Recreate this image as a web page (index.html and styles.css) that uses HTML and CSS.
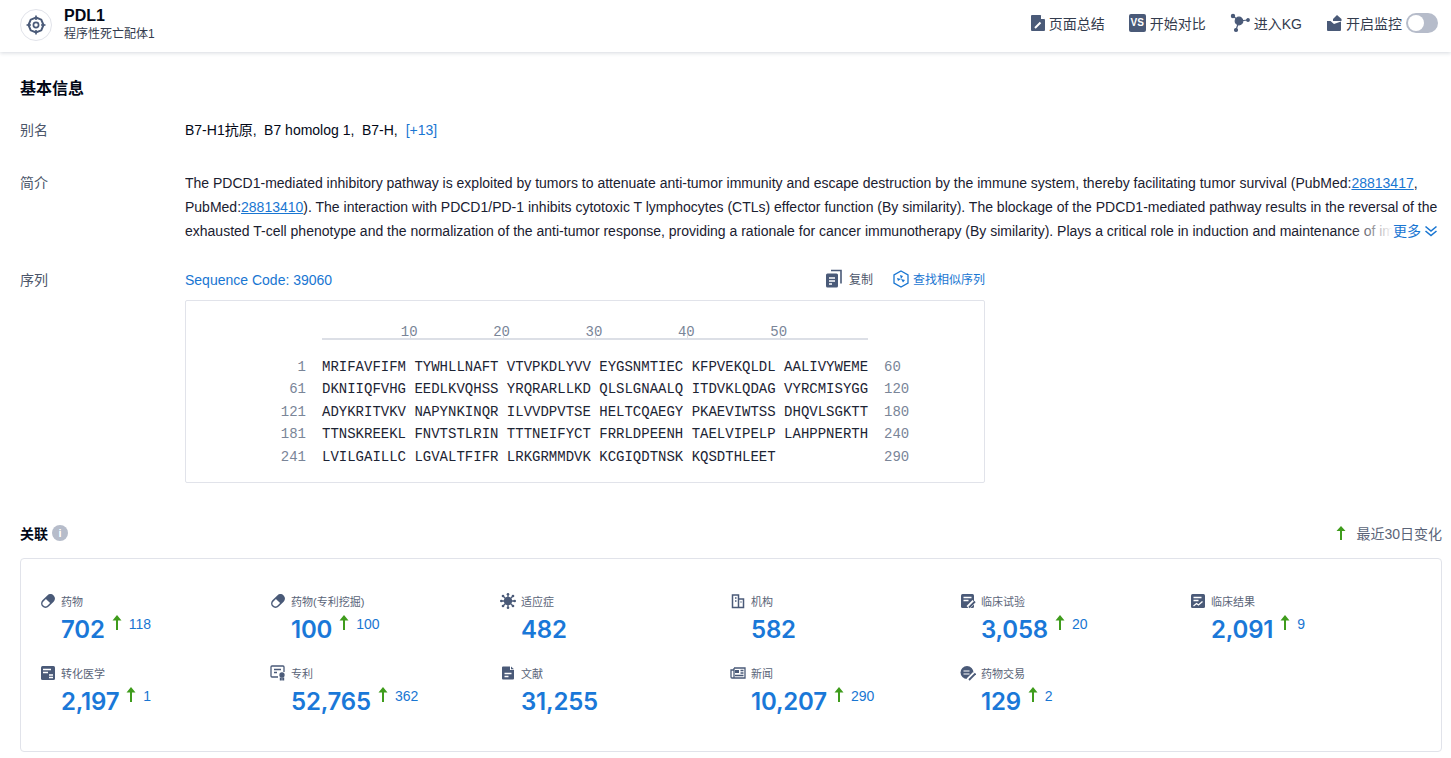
FILE: index.html
```html
<!DOCTYPE html>
<html lang="zh">
<head>
<meta charset="utf-8">
<title>PDL1</title>
<link rel="stylesheet" href="styles.css">
</head>
<body>
<header class="topbar">
  <div class="brand">
    <span class="logo">
      <svg width="20" height="20" viewBox="0 0 20 20" fill="none" stroke="#4a5a78"><path stroke-width="2" d="M10 2.500l5.300 2.200 2.200 5.300-2.200 5.300-5.300 2.200-5.300-2.200-2.200-5.300 2.200-5.300z"/><circle cx="10" cy="10" r="2.600" stroke-width="1.700"/><path stroke-width="1.600" d="M10 0.500V5M10 15v4.500M0.500 10H5M15 10h4.500"/></svg>
    </span>
    <div>
      <div class="brand-name">PDL1</div>
      <div class="brand-sub">程序性死亡配体1</div>
    </div>
  </div>
  <nav class="actions">
    <span class="action act-a"><svg width="16" height="18" viewBox="0 0 16 18"><path fill="#4a5a78" d="M2 1h8.500L15 5.500V16a1 1 0 0 1-1 1H2a1 1 0 0 1-1-1V2a1 1 0 0 1 1-1z"/><path fill="#fff" d="M11 1l4 4h-4z"/><path stroke="#fff" stroke-width="2" d="M5 14l5.500-5.500"/></svg>页面总结</span>
    <span class="action act-b"><span class="vs">VS</span>开始对比</span>
    <span class="action act-c"><svg width="20" height="20" viewBox="0 0 20 20" fill="#4a5a78" stroke="#4a5a78" stroke-width="1.200"><path d="M3 3l6 5 9-1M9 8l-3 9" fill="none"/><circle cx="9" cy="8" r="3.800"/><circle cx="3" cy="3" r="1.600"/><circle cx="18" cy="7" r="1.300"/><circle cx="6" cy="17" r="1.500"/></svg>进入KG</span>
    <span class="action act-d"><svg width="16" height="18" viewBox="0 0 16 18"><path fill="#4a5a78" d="M1 7h3.500l3.500 3 7-2.500V16a1 1 0 0 1-1 1H2a1 1 0 0 1-1-1z"/><path fill="#4a5a78" d="M11 1l4.500 4v2H7V5z"/></svg>开启监控<span class="switch"><span class="knob"></span></span></span>
  </nav>
</header>

<main class="page">
  <h2 class="section-title">基本信息</h2>

  <div class="row row-alias">
    <div class="row-label">别名</div>
    <div class="alias">
      <span>B7-H1抗原,</span><span>B7 homolog 1,</span><span>B7-H,</span><a class="link plus">[+13]</a>
    </div>
  </div>

  <div class="row row-intro">
    <div class="row-label label-intro">简介</div>
    <div class="intro">
      The PDCD1-mediated inhibitory pathway is exploited by tumors to attenuate anti-tumor immunity and escape destruction by the immune system, thereby facilitating tumor survival (PubMed:<a class="link under">28813417</a>, PubMed:<a class="link under">28813410</a>). The interaction with PDCD1/PD-1 inhibits cytotoxic T lymphocytes (CTLs) effector function (By similarity). The blockage of the PDCD1-mediated pathway results in the reversal of the exhausted T-cell phenotype and the normalization of the anti-tumor response, providing a rationale for cancer immunotherapy (By similarity). Plays a critical role in induction and maintenance of immune
      <span class="more"><span class="fade"></span><span class="more-text">更多<svg width="14" height="12" viewBox="0 0 14 12" fill="none" stroke="#1976d2" stroke-width="1.600"><path d="M1.500 1.500L7 6l5.500-4.500M1.500 6L7 10.500 12.500 6"/></svg></span></span>
    </div>
  </div>

  <div class="row row-seq">
    <div class="row-label label-seq">序列</div>
    <div class="seq-col">
      <div class="seq-head">
        <a class="link seq-code">Sequence Code: 39060</a>
        <div class="seq-tools">
          <span class="tool tool-copy"><svg width="18" height="19" viewBox="0 0 18 19"><path fill="none" stroke="#4a5a78" stroke-width="1.600" d="M6 1.500h10v13"/><rect x="1" y="4.500" width="12" height="14" rx="1.500" fill="#4a5a78"/><path stroke="#fff" stroke-width="1.500" d="M4 9h6M4 12h6M4 15h3"/></svg>复制</span>
          <a class="tool tool-find"><svg width="16" height="18" viewBox="0 0 16 18" fill="none" stroke="#1976d2"><path stroke-width="1.300" d="M8 1l7 4v8l-7 4-7-4V5z"/><path fill="#1976d2" stroke="none" d="M8 9L7 5l3 1zM8 9l4 1-2 2.500zM8 9l-3 2-1-3z"/></svg>查找相似序列</a>
        </div>
      </div>
      <div class="seq-box">
        <div class="ruler"><span>10</span><span>20</span><span>30</span><span>40</span><span>50</span></div>
        <div class="seq-lines">
          <div class="seq-line"><span class="n-l">1</span><span class="aa">MRIFAVFIFM TYWHLLNAFT VTVPKDLYVV EYGSNMTIEC KFPVEKQLDL AALIVYWEME</span><span class="n-r">60</span></div>
          <div class="seq-line"><span class="n-l">61</span><span class="aa">DKNIIQFVHG EEDLKVQHSS YRQRARLLKD QLSLGNAALQ ITDVKLQDAG VYRCMISYGG</span><span class="n-r">120</span></div>
          <div class="seq-line"><span class="n-l">121</span><span class="aa">ADYKRITVKV NAPYNKINQR ILVVDPVTSE HELTCQAEGY PKAEVIWTSS DHQVLSGKTT</span><span class="n-r">180</span></div>
          <div class="seq-line"><span class="n-l">181</span><span class="aa">TTNSKREEKL FNVTSTLRIN TTTNEIFYCT FRRLDPEENH TAELVIPELP LAHPPNERTH</span><span class="n-r">240</span></div>
          <div class="seq-line"><span class="n-l">241</span><span class="aa">LVILGAILLC LGVALTFIFR LRKGRMMDVK KCGIQDTNSK KQSDTHLEET</span><span class="n-r">290</span></div>
        </div>
      </div>
    </div>
  </div>

  <div class="rel-head">
    <div class="rel-title">关联<span class="info">i</span></div>
    <div class="rel-legend"><svg class="arrow-s" width="10" height="14" viewBox="0 0 10 14"><path fill="#3f9c1c" d="M5 0l4.500 5H6v9H4V5H.5z"/></svg>最近30日变化</div>
  </div>

  <section class="card">
    <div class="stat">
      <div class="stat-label"><svg width="16" height="16" viewBox="0 0 16 16"><g transform="rotate(-45 8 8)"><rect x="0.800" y="4.300" width="14.400" height="7.400" rx="3.700" fill="#fff" stroke="#4a5a78" stroke-width="1.500"/><path fill="#4a5a78" d="M8 4.300h3.500a3.700 3.700 0 0 1 0 7.400H8z"/></g></svg>药物</div>
      <div class="stat-val"><b>702</b><svg class="up" width="10" height="15" viewBox="0 0 10 15"><path fill="#3f9c1c" d="M5 0l4.500 5.500H6V15H4V5.500H.5z"/></svg><span class="delta">118</span></div>
    </div>
    <div class="stat">
      <div class="stat-label"><svg width="16" height="16" viewBox="0 0 16 16"><g transform="rotate(-45 8 8)"><rect x="0.800" y="4.300" width="14.400" height="7.400" rx="3.700" fill="#fff" stroke="#4a5a78" stroke-width="1.500"/><path fill="#4a5a78" d="M8 4.300h3.500a3.700 3.700 0 0 1 0 7.400H8z"/></g></svg>药物(专利挖掘)</div>
      <div class="stat-val"><b>100</b><svg class="up" width="10" height="15" viewBox="0 0 10 15"><path fill="#3f9c1c" d="M5 0l4.500 5.500H6V15H4V5.500H.5z"/></svg><span class="delta">100</span></div>
    </div>
    <div class="stat">
      <div class="stat-label"><svg width="16" height="16" viewBox="0 0 16 16" fill="#4a5a78" stroke="#4a5a78"><circle cx="8" cy="8" r="4.200" stroke="none"/><path stroke-width="1.300" d="M8 1v14M1 8h14M3 3l10 10M13 3L3 13"/><g stroke="none"><circle cx="8" cy="1.300" r="1.300"/><circle cx="8" cy="14.700" r="1.300"/><circle cx="1.300" cy="8" r="1.300"/><circle cx="14.700" cy="8" r="1.300"/><circle cx="3" cy="3" r="1.300"/><circle cx="13" cy="13" r="1.300"/><circle cx="13" cy="3" r="1.300"/><circle cx="3" cy="13" r="1.300"/></g></svg>适应症</div>
      <div class="stat-val"><b>482</b></div>
    </div>
    <div class="stat">
      <div class="stat-label"><svg width="16" height="16" viewBox="0 0 16 16" fill="none" stroke="#4a5a78" stroke-width="1.500"><path d="M2.500 14.500V2h6v12.500zM8.500 6h5v8.500h-11"/><path d="M5 5h1.500M5 8h1.500M10.500 9h1"/></svg>机构</div>
      <div class="stat-val"><b>582</b></div>
    </div>
    <div class="stat">
      <div class="stat-label"><svg width="16" height="16" viewBox="0 0 16 16"><rect x="1" y="1" width="13" height="14" rx="1.500" fill="#4a5a78"/><path stroke="#fff" stroke-width="1.300" d="M3.500 4.500h8M3.500 7.500h5"/><path stroke="#fff" stroke-width="4" d="M8 14.500l6-6"/><path stroke="#4a5a78" stroke-width="1.800" d="M9 14.500l6-6"/></svg>临床试验</div>
      <div class="stat-val"><b>3,058</b><svg class="up" width="10" height="15" viewBox="0 0 10 15"><path fill="#3f9c1c" d="M5 0l4.500 5.500H6V15H4V5.500H.5z"/></svg><span class="delta">20</span></div>
    </div>
    <div class="stat">
      <div class="stat-label"><svg width="16" height="16" viewBox="0 0 16 16"><rect x="1" y="1" width="14" height="14" rx="1.500" fill="#4a5a78"/><path stroke="#fff" stroke-width="1.300" d="M3.500 4.500h8M3.500 7.500h5"/><path fill="none" stroke="#fff" stroke-width="1.300" d="M3.500 13l3-2.500 2 1.500 4-3.500"/></svg>临床结果</div>
      <div class="stat-val"><b>2,091</b><svg class="up" width="10" height="15" viewBox="0 0 10 15"><path fill="#3f9c1c" d="M5 0l4.500 5.500H6V15H4V5.500H.5z"/></svg><span class="delta">9</span></div>
    </div>
    <div class="stat">
      <div class="stat-label"><svg width="16" height="16" viewBox="0 0 16 16"><rect x="1" y="1" width="14" height="14" rx="1.500" fill="#4a5a78"/><path stroke="#fff" stroke-width="1.300" d="M3 4.500h8M3 7.500h5M9 10h4M9 12.500h4"/></svg>转化医学</div>
      <div class="stat-val"><b>2,197</b><svg class="up" width="10" height="15" viewBox="0 0 10 15"><path fill="#3f9c1c" d="M5 0l4.500 5.500H6V15H4V5.500H.5z"/></svg><span class="delta">1</span></div>
    </div>
    <div class="stat">
      <div class="stat-label"><svg width="16" height="16" viewBox="0 0 16 16" fill="none" stroke="#4a5a78" stroke-width="1.300"><path d="M8 12H2a1 1 0 0 1-1-1V2a1 1 0 0 1 1-1h11a1 1 0 0 1 1 1v5"/><path d="M4 4.500h7M4 7.500h3"/><circle cx="12" cy="10" r="2" fill="#4a5a78"/><path stroke-width="2" d="M10.800 12.500V15.500M13.200 12.500V15.500"/></svg>专利</div>
      <div class="stat-val"><b>52,765</b><svg class="up" width="10" height="15" viewBox="0 0 10 15"><path fill="#3f9c1c" d="M5 0l4.500 5.500H6V15H4V5.500H.5z"/></svg><span class="delta">362</span></div>
    </div>
    <div class="stat">
      <div class="stat-label"><svg width="16" height="16" viewBox="0 0 16 16"><path fill="#4a5a78" d="M3 1.500h7v3.500h4v8.500a1 1 0 0 1-1 1H3a1 1 0 0 1-1-1v-11a1 1 0 0 1 1-1z"/><path fill="#4a5a78" d="M11 1.500l3 2.700h-3z"/><path stroke="#fff" stroke-width="1.300" d="M4.500 8.500h7M4.500 11.500h4"/></svg>文献</div>
      <div class="stat-val"><b>31,255</b></div>
    </div>
    <div class="stat">
      <div class="stat-label"><svg width="16" height="16" viewBox="0 0 16 16"><path fill="none" stroke="#4a5a78" stroke-width="1.300" d="M4 3h11v10H2a1 1 0 0 1-1-1V5h3"/><rect x="5" y="5" width="4" height="3" fill="#4a5a78"/><path stroke="#4a5a78" stroke-width="1.300" d="M4 3v10M10.500 5.500h3M10.500 8h3M5 10.500h8.500"/></svg>新闻</div>
      <div class="stat-val"><b>10,207</b><svg class="up" width="10" height="15" viewBox="0 0 10 15"><path fill="#3f9c1c" d="M5 0l4.500 5.500H6V15H4V5.500H.5z"/></svg><span class="delta">290</span></div>
    </div>
    <div class="stat">
      <div class="stat-label"><svg width="16" height="16" viewBox="0 0 16 16"><circle cx="7" cy="7.500" r="6.500" fill="#4a5a78"/><path stroke="#fff" stroke-width="1.200" d="M3.500 6h6M3.500 9h6"/><path stroke="#fff" stroke-width="4" d="M8 15l6.500-6.500"/><path stroke="#4a5a78" stroke-width="1.800" d="M9 15l6.500-6.500"/></svg>药物交易</div>
      <div class="stat-val"><b>129</b><svg class="up" width="10" height="15" viewBox="0 0 10 15"><path fill="#3f9c1c" d="M5 0l4.500 5.500H6V15H4V5.500H.5z"/></svg><span class="delta">2</span></div>
    </div>
  </section>
</main>
</body>
</html>
```
FILE: styles.css
```css
* { box-sizing: border-box; }
html, body { height: 100%; }
body {
  margin: 0;
  overflow: hidden;
  background: #fff;
  color: #020817;
  font-family: "Liberation Sans", "Noto Sans CJK SC", sans-serif;
  font-size: 14px;
}
a { text-decoration: none; }
.link { color: #1976d2; }
.under { text-decoration: underline; }

.topbar {
  height: 52px;
  display: flex;
  align-items: center;
  justify-content: space-between;
  padding: 0 13px 0 20px;
  box-shadow: 0 1px 4px rgba(70, 80, 110, 0.22);
}
.brand { display: flex; align-items: center; gap: 12px; margin-bottom: 2px; }
.logo {
  width: 32px;
  height: 32px;
  border: 1px solid #e1e3ea;
  border-radius: 50%;
  display: flex;
  align-items: center;
  justify-content: center;
}
.brand-name { font-size: 16px; font-weight: 700; line-height: 18px; }
.brand-sub { font-size: 12px; line-height: 18px; color: #333b4d; }

.actions { display: flex; align-items: center; margin-bottom: 6px; }
.action { display: flex; align-items: center; gap: 3px; color: #333b4d; font-size: 14px; }
.act-b { margin-left: 24px; gap: 4px; }
.act-c { margin-left: 24px; gap: 4px; }
.act-d { margin-left: 24px; gap: 4px; }
.vs {
  width: 17px;
  height: 18px;
  border-radius: 2px;
  background: #4a5a78;
  color: #fff;
  font-size: 10px;
  font-weight: 700;
  line-height: 18px;
  text-align: center;
}
.switch {
  width: 32px;
  height: 20px;
  padding: 2px;
  border-radius: 10px;
  background: #b6bcca;
  display: block;
}
.knob { display: block; width: 16px; height: 16px; border-radius: 50%; background: #fff; }

.page { padding: 0 9px 0 20px; }
.section-title {
  margin: 0;
  padding-top: 27px;
  font-size: 16px;
  line-height: 20px;
  font-weight: 700;
}
.row { display: flex; }
.row-label { width: 165px; flex: none; line-height: 24px; color: #4c566a; }
.row-alias { margin-top: 19px; line-height: 24px; }
.alias { display: flex; gap: 7.5px; }
.plus { margin-left: 0.5px; }

.row-intro { margin-top: 29px; }
.intro {
  position: relative;
  width: 1256px;
  height: 72px;
  overflow: hidden;
  line-height: 24px;
  color: #1a2030;
}
.more { position: absolute; right: 3px; bottom: 0; height: 24px; display: flex; }
.fade { width: 42px; background: linear-gradient(90deg, rgba(255,255,255,0), #fff); }
.more-text { display: flex; align-items: center; gap: 3px; background: #fff; color: #1976d2; }

.row-seq { margin-top: 25px; }
.label-seq { line-height: 24px; }
.seq-col { width: 800px; flex: none; }
.seq-head { display: flex; align-items: center; justify-content: space-between; height: 24px; }
.seq-tools { display: flex; align-items: center; font-size: 12px; margin-bottom: 3px; }
.tool { display: flex; align-items: center; }
.tool-copy { gap: 6px; color: #4c566a; }
.tool-find { gap: 4px; margin-left: 20px; color: #1976d2; }
.seq-box {
  margin-top: 8px;
  height: 183px;
  border: 1px solid #e1e3ea;
  border-radius: 2px;
  padding-top: 22px;
  font-family: "Liberation Mono", monospace;
  font-size: 14px;
}
.ruler {
  display: flex;
  width: 546px;
  height: 17px;
  margin-left: 136px;
  padding-left: 41px;
  border-bottom: 2px solid #dcdfe6;
  color: #7a8598;
  font-size: 14px;
  line-height: 18px;
}
.ruler span { position: relative; width: 92.4px; text-align: center; flex: none; height: 15px; }
.ruler span::after {
  content: "";
  position: absolute;
  left: 50%;
  top: 12px;
  width: 1px;
  height: 3px;
  margin-left: 1px;
  background: #dcdfe6;
}
.seq-lines { margin-top: 16px; }
.seq-line { display: flex; gap: 16px; height: 22.4px; line-height: 22.4px; }
.n-l { width: 120px; text-align: right; color: #7a8598; }
.aa { width: 546px; white-space: pre; color: #1c2434; }
.n-r { color: #7a8598; }

.rel-head {
  display: flex;
  justify-content: space-between;
  align-items: center;
  margin-top: 39px;
  height: 22px;
}
.rel-title { display: flex; align-items: center; gap: 4px; font-size: 14px; font-weight: 700; }
.info {
  width: 16px;
  height: 16px;
  border-radius: 50%;
  background: #b6bcca;
  color: #fff;
  font-size: 11px;
  line-height: 16px;
  text-align: center;
}
.rel-legend { display: flex; align-items: center; gap: 10px; color: #5a6478; font-size: 14px; }
.card {
  margin-top: 14px;
  height: 194px;
  border: 1px solid #e1e3ea;
  border-radius: 4px;
  padding: 34px 0 0 19px;
  display: grid;
  grid-template-columns: repeat(6, 230px);
  grid-auto-rows: 72px;
}
.stat-label {
  display: flex;
  align-items: center;
  gap: 5px;
  height: 16px;
  font-size: 11px;
  color: #5a6478;
}
.stat-val {
  display: flex;
  align-items: flex-start;
  margin: 6px 0 0 21px;
  height: 30px;
  color: #1976d2;
}
.stat-val b {
  font-family: Inter, "Liberation Sans", sans-serif;
  font-size: 24px;
  font-weight: 600;
  letter-spacing: -0.2px;
  line-height: 30px;
  color: #1a78d8;
}
.up { margin: 0 0 0 7px; }
.delta { margin-left: 7px; font-size: 14px; line-height: 16px; margin-top: 1px; }
```
